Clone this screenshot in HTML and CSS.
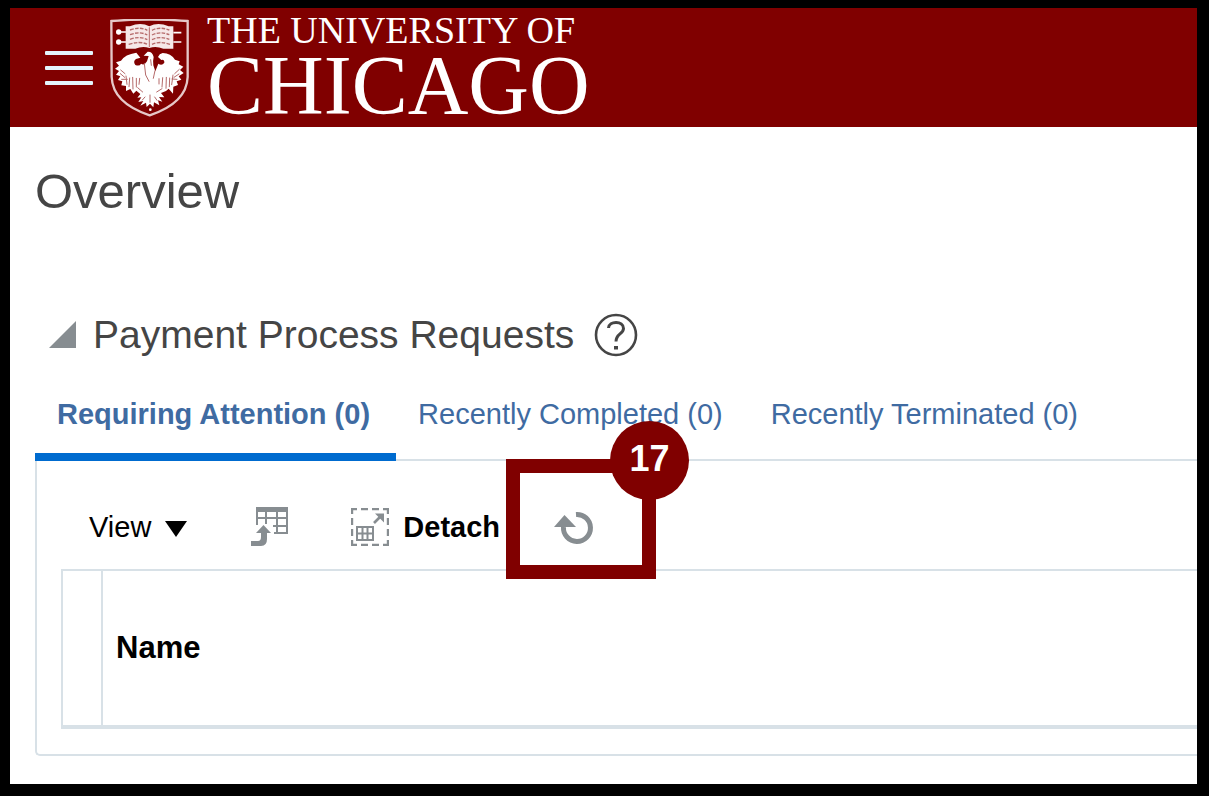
FILE: index.html
```html
<!DOCTYPE html>
<html lang="en">
<head>
    <meta charset="UTF-8">
    <meta name="viewport" content="width=device-width, initial-scale=1.0">
    <title>Overview</title>
    <link rel="stylesheet" href="styles.css">
</head>
<body>

    <header class="header">
        <button class="menu-button" aria-label="Menu">
            <span></span>
            <span></span>
            <span></span>
        </button>
        <a class="logo" href="#">
            <svg class="shield" viewBox="60 54 237 294" aria-hidden="true">
                <path d="M64 60 Q178 51 293 60 V228 C291 280 254 318 179 343 C104 318 67 280 65 228 Z" fill="none" stroke="#e6c8c8" stroke-width="7"/>
                <!-- book -->
                <g stroke="#fff" stroke-width="5">
                    <path d="M84 93 H108 M84 123 H108 M250 95 H274 M250 123 H274"/>
                </g>
                <circle cx="86" cy="93" r="8" fill="#fff"/>
                <circle cx="86" cy="123" r="8" fill="#fff"/>
                <path d="M107 76 L120 76 Q152 62 178 76 Q204 62 236 76 L250 76 V143 H220 Q198 134 178 141 Q158 134 136 143 H107 Z" fill="#f6e8e8"/>
                <g fill="none" stroke="#b56a6a" stroke-width="4" stroke-dasharray="11 4">
                    <path d="M120 87 Q150 76 172 88 M120 101 Q150 90 172 102 M120 115 Q150 104 172 116 M116 130 Q150 119 172 130"/>
                    <path d="M186 88 Q208 76 238 87 M186 102 Q208 90 238 101 M186 116 Q208 104 238 115 M186 130 Q208 119 240 130"/>
                </g>
                <path d="M178 79 V138" stroke="#b56a6a" stroke-width="3"/>
                <!-- phoenix -->
                <path d="M139 155 Q105 160 93 179 L78 184 L87 194 L75 203 L87 210 L78 221 L91 226 L84 237 L97 241 L94 253 L108 255 L108 270 L121 264 L130 278 L139 269 L151 279 L142 290 L154 289 L145 303 L160 300 L151 314 L168 305 L170 318 L180 308 L190 319 L192 304 L208 313 L204 298 L217 302 L207 288 L223 289 L213 276 L228 270 L236 263 L249 278 L250 257 L264 252 L260 241 L274 236 L266 226 L281 216 L270 207 L280 197 L266 190 L269 181 L255 176 Q243 157 218 156 Q208 158 204 168 L214 177 Q223 174 223 185 Q216 195 205 188 L196 211 L190 193 Q188 181 191 168 Q187 151 173 152 L161 164 L176 165 L171 181 Q163 195 153 188 Q149 197 136 192 Q128 181 138 174 L151 170 Z" fill="#fff"/>
                <g fill="none" stroke="#b56a6a" stroke-width="3" stroke-linecap="round">
                    <path d="M163 187 L167 222 L177 241 M195 209 L190 232 M182 176 L184 193"/>
                    <path d="M92 207 L105 218 M91 218 L104 229 M95 235 L112 235 M108 225 L111 250 M119 231 L117 257 M128 229 L129 264 M139 232 L139 258 M149 232 L147 250"/>
                    <path d="M268 205 L254 218 M267 219 L252 229 M261 235 L246 234 M249 222 L245 251 M239 231 L238 257 M229 229 L228 262 M218 230 L216 258 M207 233 L207 249"/>
                    <path d="M158 273 L143 260 M200 273 L216 263 M165 288 L157 297 M194 288 L201 298 M180 282 V304"/>
                </g>
                <circle cx="181" cy="326" r="4" fill="#fff"/>
            </svg>
            <span class="wordmark">
                <span class="wordmark-top">THE UNIVERSITY OF</span>
                <span class="wordmark-main">CHICAGO</span>
            </span>
        </a>
    </header>

    <main class="content">
        <h1>Overview</h1>

        <section>
            <div class="section-title">
                <button class="collapse" aria-label="Collapse section">
                    <svg width="28" height="28" viewBox="0 0 28 28"><path d="M27 0 V27 H0 Z" fill="#878d91"/></svg>
                </button>
                <h2>Payment Process Requests</h2>
                <button class="help" aria-label="Help">
                    <svg width="44" height="44" viewBox="0 0 44 44">
                        <circle cx="22" cy="22" r="20" fill="none" stroke="#454545" stroke-width="2.6"/>
                        <path d="M14.5 15 C15 7.500 29.500 7.500 29.500 15.500 C29.500 21 22 20.500 22 28.500" fill="none" stroke="#454545" stroke-width="3"/>
                        <path d="M20 33 H24 V36.500 H20 Z" fill="#454545"/>
                    </svg>
                </button>
            </div>

            <nav class="tabs">
                <a class="tab active" href="#">Requiring Attention (0)</a>
                <a class="tab" href="#">Recently Completed (0)</a>
                <a class="tab" href="#">Recently Terminated (0)</a>
            </nav>

            <div class="panel">
                <div class="toolbar">
                    <button class="view-button">
                        View
                        <svg width="22" height="16" viewBox="0 0 22 16"><path d="M0 0 H22 L11 16 Z" fill="#000"/></svg>
                    </button>
                    <button class="freeze-button" aria-label="Freeze">
                        <svg width="38" height="40" viewBox="0 0 38 40">
                            <path d="M5 0 H37 V27 H23 V25 H35 V20 H22 V18 H35 V12 H7 V18 H5 Z M7 5 V10 H14 V5 Z M16 5 V10 H25 V5 Z M27 5 V10 H35 V5 Z" fill="#878d91" fill-rule="evenodd"/>
                            <path d="M15 5 V17 M26 5 V26" stroke="#878d91" stroke-width="2"/>
                            <path d="M12.500 18 L20 26 H16 V32 Q16 39 10 39 H0 V34 H7 Q10 34 10 30 V26 H5 Z" fill="#878d91"/>
                        </svg>
                    </button>
                    <button class="detach-button">
                        <svg width="38" height="38" viewBox="0 0 38 38">
                            <path d="M1 6 V1 H6 M10 1 H17 M21 1 H28 M32 1 H37 V6 M37 10 V17 M37 21 V28 M37 32 V37 H32 M28 37 H21 M17 37 H10 M6 37 H1 V32 M1 28 V21 M1 17 V10" fill="none" stroke="#878d91" stroke-width="2.400"/>
                            <path d="M6 19 H22 V32 H6 Z M6 25.500 H22 M11.500 19 V32 M16.500 19 V32" fill="none" stroke="#878d91" stroke-width="2"/>
                            <path d="M23 15 L30 8" stroke="#878d91" stroke-width="2.600"/>
                            <path d="M24 5.500 H33 V14.500 Z" fill="#878d91"/>
                        </svg>
                        Detach
                    </button>
                    <div class="refresh">
                        <button aria-label="Refresh">
                            <svg width="40" height="40" viewBox="0 0 40 40">
                                <path d="M22 7.500 A13.500 13.500 0 1 1 9.500 20" fill="none" stroke="#878d91" stroke-width="5"/>
                                <path d="M0 20 L10.500 8 L22 20 Z" fill="#878d91"/>
                            </svg>
                        </button>
                        <div class="callout"><span class="callout-number">17</span></div>
                    </div>
                </div>

                <table>
                    <thead>
                        <tr>
                            <td class="select-cell"></td>
                            <th scope="col">Name</th>
                        </tr>
                    </thead>
                </table>
            </div>
        </section>
    </main>

</body>
</html>
```
FILE: styles.css
```css
/* General Styles */
* {
    box-sizing: border-box;
}

body {
    margin: 0;
    min-height: 100vh;
    border: solid #000;
    border-width: 8px 12px 12px 10px;
    background: #fff;
    color: #454545;
    font-family: "Liberation Sans", Arial, sans-serif;
    font-size: 29px;
    line-height: 34px;
    overflow-x: hidden;
}

button {
    padding: 0;
    border: none;
    background: none;
    color: #000;
    font: inherit;
    cursor: pointer;
}

svg {
    display: block;
    flex: none;
}

/* Header */
.header {
    display: flex;
    align-items: center;
    gap: 17px;
    height: 119px;
    padding-left: 35px;
    background: #800000;
}

.menu-button {
    display: flex;
    flex-direction: column;
    gap: 11px;
    width: 48px;
}

.menu-button span {
    height: 4px;
    border-radius: 1px;
    background: #e4f5fc;
}

.logo {
    display: flex;
    align-items: center;
    gap: 18px;
    color: #fff;
    text-decoration: none;
}

.shield {
    width: 79px;
    height: 98px;
}

.wordmark {
    display: flex;
    flex-direction: column;
    gap: 4px;
    padding-bottom: 4px;
    font-family: "Liberation Serif", "Times New Roman", serif;
    white-space: nowrap;
}

.wordmark-top {
    font-size: 38px;
    line-height: 36px;
}

.wordmark-main {
    font-size: 84px;
    line-height: 68px;
}

/* Content */
.content {
    padding: 36px 0 27px 25px;
}

h1 {
    margin: 0 0 94px;
    font-size: 49px;
    font-weight: normal;
    line-height: 56px;
}

.section-title {
    display: flex;
    align-items: center;
    padding-left: 14px;
}

h2 {
    margin: 0 20px 0 16px;
    font-size: 39px;
    font-weight: normal;
    line-height: 44px;
}

/* Tabs */
.tabs {
    display: flex;
    margin-top: 24px;
    box-shadow: inset 0 -2px #d8e1e7;
}

.tab {
    padding: 16px 26px 22px 22px;
    border-bottom: 8px solid transparent;
    color: #3f6ba2;
    text-decoration: none;
    white-space: nowrap;
}

.tab.active {
    border-color: #006bcf;
    font-weight: bold;
}

/* Panel */
.panel {
    padding: 46px 0 25px 24px;
    border: solid #d8e1e7;
    border-width: 0 0 2px 2px;
    border-radius: 0 0 0 5px;
}

.toolbar {
    display: flex;
    align-items: center;
    gap: 54px;
    padding: 0 0 22px 28px;
}

.view-button,
.detach-button {
    display: flex;
    align-items: center;
    gap: 14px;
}

.view-button svg {
    margin-top: 4px;
}

.freeze-button {
    padding: 0 8px 0 10px;
}

.detach-button {
    font-weight: bold;
}

/* Callout around the refresh button */
.refresh {
    display: flex;
    position: relative;
}

.callout {
    position: absolute;
    top: -48px;
    left: -48px;
    width: 150px;
    height: 120px;
    border: 14px solid #800000;
    pointer-events: none;
}

.callout-number {
    position: absolute;
    top: -52px;
    left: 90px;
    width: 79px;
    height: 79px;
    border-radius: 50%;
    background: #800000;
    color: #fff;
    font-size: 36px;
    font-weight: bold;
    line-height: 75px;
    text-align: center;
}

/* Table */
table {
    width: 100%;
    border: solid #d8e1e7;
    border-width: 2px 0 4px 2px;
    border-spacing: 0;
    color: #000;
}

th {
    height: 154px;
    padding: 0 13px;
    font-size: 31px;
    text-align: left;
}

.select-cell {
    width: 40px;
    border-right: 2px solid #d8e1e7;
}
```
